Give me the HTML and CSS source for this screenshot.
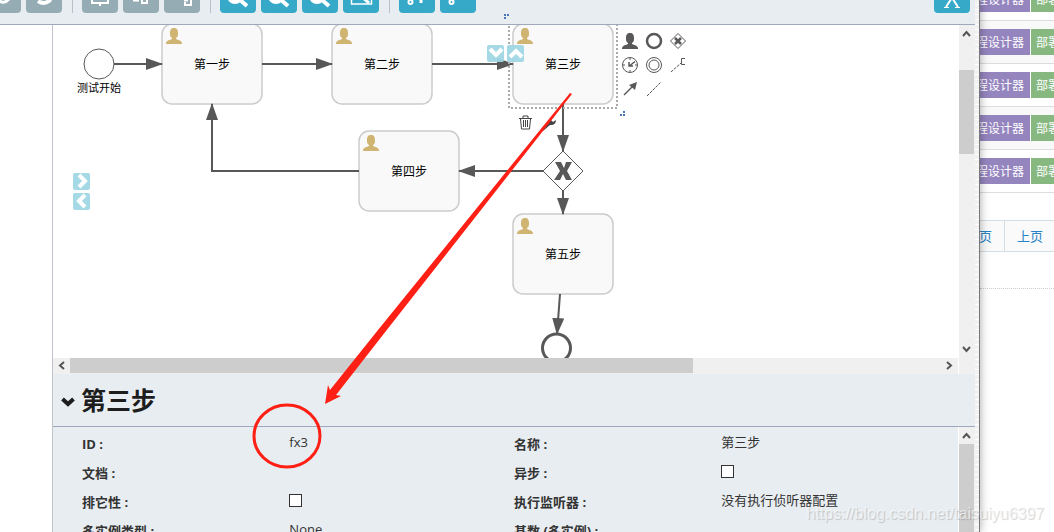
FILE: index.html
```html
<!DOCTYPE html>
<html lang="zh-CN">
<head>
  <meta charset="UTF-8" />
  <meta name="viewport" content="width=device-width, initial-scale=1.0"/>
  <title>流程设计器</title>
  <link rel="stylesheet" href="styles.css">
</head>
<body>
  <div class="designer">
    <div class="app">
      <!-- Toolbar -->
      <header class="toolbar">
        <button class="tool disabled" aria-label="Undo"><svg viewBox="0 0 36 28"><path d="M24 14q-5 6-11 1" stroke-width="3"/></svg></button>
        <button class="tool disabled" aria-label="Redo"><svg viewBox="0 0 36 28"><path d="M12 16q6 4 11 0 3-3 1-7" stroke-width="4"/></svg></button>
        <span class="divider"></span>
        <button class="tool disabled" aria-label="Align vertical"><svg viewBox="0 0 36 28"><path d="M10 8v10h16V8M18 18v3" stroke-width="2"/></svg></button>
        <button class="tool disabled" aria-label="Align horizontal"><svg viewBox="0 0 36 28"><path d="M10 15.500h6M19 8v10h5V8" stroke-width="2"/></svg></button>
        <button class="tool disabled" aria-label="Same size"><svg viewBox="0 0 36 28"><path d="M21 17v3h6V8M20 15.500h4" stroke-width="2"/></svg></button>
        <span class="divider"></span>
        <button class="tool" aria-label="Zoom in"><svg viewBox="0 0 36 28"><circle cx="15" cy="11" r="6" stroke-width="4"/><path d="M19 14l8 7" stroke-width="4"/></svg></button>
        <button class="tool" aria-label="Zoom out"><svg viewBox="0 0 36 28"><circle cx="15" cy="11" r="6" stroke-width="4"/><path d="M19 14l8 7" stroke-width="4"/></svg></button>
        <button class="tool" aria-label="Zoom actual"><svg viewBox="0 0 36 28"><circle cx="15" cy="11" r="6" stroke-width="4"/><path d="M19 14l8 7" stroke-width="4"/></svg></button>
        <button class="tool" aria-label="Zoom fit"><svg viewBox="0 0 36 28"><path d="M8.500 6v13h20V6" stroke-width="1.500"/><path d="M19 12l7 6" stroke-width="3"/></svg></button>
        <span class="divider"></span>
        <button class="tool" aria-label="Add bend point"><svg viewBox="0 0 36 28"><circle cx="11.500" cy="17" r="2" stroke-width="2"/><path d="M22 10v8" stroke-width="3"/></svg></button>
        <button class="tool" aria-label="Remove bend point"><svg viewBox="0 0 36 28"><circle cx="11.500" cy="17" r="2" stroke-width="2"/></svg></button>
        <button class="tool close" aria-label="Close"><svg viewBox="0 0 36 28"><path d="M13 5l11 17M23 5L12 22" stroke-width="2"/><path d="M10 22.500h5M21 22.500h5" stroke-width="1"/></svg></button>
      </header>

      <div class="workspace">
        <aside class="palette"></aside>
        <main class="editor">
          <div class="canvas-row">
            <div class="canvas-col">
              <div class="canvas">
                <svg class="diagram" width="1200" height="500" viewBox="53 25 1200 500">
                  <defs>
                    <marker id="arrow" markerUnits="userSpaceOnUse" markerWidth="17" markerHeight="12" refX="16" refY="6" orient="auto">
                      <path d="M0 0L17 6L0 12z" fill="#585858"/>
                    </marker>
                    <path id="user" d="M8 0C5 0 4 2 4 5c0 2 0 4 2 5v1c-2 1-5 1-6 4v1h16v-1c-1-3-4-3-6-4v-1c2-1 2-3 2-5 0-3-1-5-4-5z"/>
                    <rect id="task" width="100" height="80" rx="10" fill="#f9f9f9" stroke="#cbcbcb" stroke-width="1.500"/>
                  </defs>

                  <!-- Nodes -->
                  <circle cx="99" cy="64" r="15" fill="#fff" stroke="#585858"/>
                  <use href="#task" x="162" y="24"/>
                  <use href="#task" x="332" y="24"/>
                  <use href="#task" x="513" y="24"/>
                  <use href="#task" x="359" y="131"/>
                  <use href="#task" x="513" y="214"/>
                  <path d="M563 151l20 20-20 20-20-20z" fill="#fff" stroke="#585858"/>
                  <path d="M555 162h6l3 6 2-6h6l-5 9 5 9h-6l-3-6-3 6h-6l6-9z" fill="#585858"/>
                  <circle cx="556.500" cy="348" r="14" fill="#fff" stroke="#585858" stroke-width="3"/>

                  <g fill="#d0b471">
                    <use href="#user" x="166" y="28"/>
                    <use href="#user" x="336" y="28"/>
                    <use href="#user" x="517" y="28"/>
                    <use href="#user" x="363" y="135"/>
                    <use href="#user" x="517" y="218"/>
                  </g>

                  <!-- Flows -->
                  <g class="flow">
                    <path d="M114 64H162"/>
                    <path d="M262 64H332"/>
                    <path d="M432 64H513"/>
                    <path d="M563 104V151"/>
                    <path d="M543 171H459"/>
                    <path d="M359 171H212V104"/>
                    <path d="M563 191V214"/>
                    <path d="M560 294L557 334"/>
                  </g>

                  <g class="node-text">
                    <text x="99" y="92" class="event-text">测试开始</text>
                    <text x="212" y="69">第一步</text>
                    <text x="382" y="69">第二步</text>
                    <text x="563" y="69">第三步</text>
                    <text x="409" y="176">第四步</text>
                    <text x="563" y="259">第五步</text>
                  </g>

                  <!-- Selection -->
                  <rect x="509" y="20" width="108" height="88" fill="none" stroke="#aaa" stroke-width="2" stroke-dasharray="2 2"/>
                  <path d="M623 111h2v2h-2zM620 114h2v2h-2zM623 114h2v2h-2z" fill="#4677b8"/>

                  <!-- Grow buttons -->
                  <g fill="#9fd7e4" fill-opacity="0.95">
                    <rect x="487" y="45" width="17" height="17" rx="2"/>
                    <rect x="507" y="45" width="17" height="17" rx="2"/>
                    <rect x="73" y="173" width="17" height="17" rx="2"/>
                    <rect x="73" y="193" width="17" height="17" rx="2"/>
                  </g>
                  <path d="M490 49l6 6 6-6M510 57l6-6 6 6M79 175l6 6-6 6M85 195l-6 6 6 6" fill="none" stroke="#fff" stroke-width="4"/>

                  <!-- Quick menu -->
                  <use href="#user" x="622" y="33" fill="#585858"/>
                  <g fill="none" stroke="#585858">
                    <circle cx="654" cy="41" r="7" stroke-width="2.500"/>
                    <path d="M678 33.500l7.500 7.500-7.500 7.500-7.500-7.500z"/>
                    <path d="M675 38l6 6M681 38l-6 6" stroke-width="2.500"/>
                    <circle cx="630" cy="65" r="7.500"/>
                    <path d="M630 65.500l5-4M629 62v4h4" stroke-width="1.500"/>
                    <path d="M630 58v2M630 70v2M623 65h2M635 65h2"/>
                    <circle cx="654" cy="65" r="7.500"/>
                    <circle cx="654" cy="65" r="5"/>
                    <path d="M685 58.500h-3.500v6h3.500"/>
                    <path d="M671 72l10-9M647 96l14-14" stroke-dasharray="3 1"/>
                    <path d="M624 95l9-9" stroke-width="1.500"/>
                  </g>
                  <path d="M637 82l-2 8-6-5z" fill="#585858"/>
                  <g fill="none" stroke="#444">
                    <path d="M519 118.500h13M523 118v-2h5v2M520.500 119l1 10h8l1-10M523.500 120v7M525.500 120v7M527.500 120v7"/>
                  </g>
                  <path d="M541 129l8-8c0-2 2-4 5-4l-3 3 2 2 3-2c0 3-2 5-5 5h-1l-7 6z" fill="#444"/>
                </svg>
              </div>
              <div class="hscroll">
                <svg viewBox="0 0 17 15"><path d="M11 4L7 7.500L11 11"/></svg>
                <div class="track"><div class="thumb"></div></div>
                <svg viewBox="0 0 17 15"><path d="M6 4l4 3.500L6 11"/></svg>
              </div>
            </div>
            <div class="vscroll">
              <svg viewBox="0 0 15 17"><path d="M4 11l3.500-4L11 11"/></svg>
              <div class="track"><div class="thumb"></div></div>
              <svg viewBox="0 0 15 17"><path d="M4 6l3.500 4L11 6"/></svg>
            </div>
          </div>

          <div class="panel-title">
            <svg viewBox="0 0 14 10"><path d="M1.500 2l5.500 5 5.500-5"/></svg>
            <h1>第三步</h1>
          </div>

          <!-- Properties -->
          <div class="panel-row">
            <div class="properties">
              <div class="property"><span class="label">ID :</span><span class="value">fx3</span></div>
              <div class="property"><span class="label">名称 :</span><span class="value">第三步</span></div>
              <div class="property"><span class="label">文档 :</span><span class="value"></span></div>
              <div class="property"><label class="label" for="async">异步 :</label><span class="value"><input type="checkbox" id="async"></span></div>
              <div class="property"><label class="label" for="exclusive">排它性 :</label><span class="value"><input type="checkbox" id="exclusive"></span></div>
              <div class="property"><span class="label">执行监听器 :</span><span class="value">没有执行侦听器配置</span></div>
              <div class="property"><span class="label">多实例类型 :</span><span class="value">None</span></div>
              <div class="property"><span class="label">基数 (多实例) :</span><span class="value"></span></div>
            </div>
            <div class="vscroll panel-scroll">
              <svg viewBox="0 0 15 17"><path d="M4 11l3.500-4L11 11"/></svg>
              <div class="track"><div class="thumb"></div></div>
            </div>
          </div>
        </main>
      </div>
    </div>
    <div class="edge"></div>
  </div>

  <!-- Model list behind the designer -->
  <div class="list-page">
    <div class="list-row"><button class="design">流程设计器</button><button class="deploy">部署</button></div>
    <div class="list-row"><button class="design">流程设计器</button><button class="deploy">部署</button></div>
    <div class="list-row"><button class="design">流程设计器</button><button class="deploy">部署</button></div>
    <div class="list-row"><button class="design">流程设计器</button><button class="deploy">部署</button></div>
    <div class="list-row"><button class="design">流程设计器</button><button class="deploy">部署</button></div>
    <nav class="pager"><a href="#">首页</a><a href="#">上页</a></nav>
    <hr>
  </div>

  <svg class="annotation" width="1054" height="532" viewBox="0 0 1054 532">
    <path d="M504 14h2v2h-2zM507 14h2v2h-2zM504 17h2v2h-2z" fill="#4677b8"/>
    <path d="M570 93l2 1L386 331 336 395l5 1-16 8 3-19 2 5 48-60z" fill="#ff2015"/>
    <ellipse cx="287" cy="436" rx="33" ry="31" fill="none" stroke="#ff2015" stroke-width="3"/>
  </svg>
  <div class="watermark">https://blog.csdn.net/taisuiyu6397</div>
</body>
</html>
```
FILE: styles.css
```css
* {
  box-sizing: border-box;
}

body {
  margin: 0;
  height: 100vh;
  display: flex;
  position: relative;
  overflow: hidden;
  background: #fff;
  color: #333;
  font-family: "Open Sans", "Noto Sans CJK SC", sans-serif;
  font-size: 13px;
}

button {
  border: none;
  padding: 0;
  font-family: inherit;
  cursor: pointer;
}

.designer {
  flex: 1;
  min-width: 0;
  display: flex;
  border-right: 1px solid #777;
  box-shadow: 0 0 9px rgba(0, 0, 0, 0.35);
  z-index: 1;
  background: #fff;
}

.app {
  flex: 1;
  min-width: 0;
  display: flex;
  flex-direction: column;
}

.edge {
  width: 4px;
  background: repeating-linear-gradient(#f1f1f1 0, #f1f1f1 4px, #fff 4px, #fff 5px);
}

/* Toolbar */
.toolbar {
  height: 25px;
  flex: none;
  display: flex;
  align-items: flex-end;
  gap: 5px;
  padding: 0 5px 11px 0;
  overflow: hidden;
  background: #e8edf1;
  border-bottom: 1px solid #a0a8bd;
}

.tool {
  width: 36px;
  height: 28px;
  flex: none;
  border-radius: 4px;
  background: #36a9c9;
}

.tool:first-child {
  margin-left: -15px;
}

.tool svg {
  display: block;
  width: 36px;
  height: 28px;
  fill: none;
  stroke: #fff;
}

.tool.disabled {
  background: #95acb4;
}

.tool.close {
  margin-left: auto;
}

.divider {
  width: 1px;
  height: 28px;
  margin: 0 4px 0 5px;
  background: #b8c0c8;
}

.workspace {
  flex: 1;
  min-height: 0;
  display: flex;
}

.palette {
  width: 53px;
  border-right: 1px solid #c0c4cc;
}

.editor {
  flex: 1;
  min-width: 0;
  display: flex;
  flex-direction: column;
}

/* Canvas */
.canvas-row {
  flex: 1;
  min-height: 0;
  display: flex;
}

.canvas-col {
  flex: 1;
  min-width: 0;
  display: flex;
  flex-direction: column;
}

.canvas {
  flex: 1;
  min-height: 0;
  overflow: hidden;
}

.diagram {
  display: block;
}

.flow path {
  fill: none;
  stroke: #585858;
  stroke-width: 2;
  marker-end: url(#arrow);
}

.node-text text {
  font-size: 12px;
  text-anchor: middle;
  fill: #000;
}

.node-text .event-text {
  font-size: 11px;
}

/* Scrollbars */
.hscroll,
.vscroll {
  display: flex;
  flex: none;
  background: #f0f0f0;
}

.hscroll {
  height: 16px;
}

.hscroll svg {
  width: 17px;
  height: 15px;
}

.vscroll {
  width: 17px;
  flex-direction: column;
  border-left: 1px solid #fff;
}

.vscroll svg {
  width: 15px;
  height: 17px;
}

.vscroll svg,
.hscroll svg {
  flex: none;
  fill: none;
  stroke: #555;
  stroke-width: 2;
}

.track {
  flex: 1;
}

.thumb {
  background: #cdcdcd;
}

.hscroll .thumb {
  width: 71.5%;
  height: 15px;
}

.vscroll .thumb {
  width: 15px;
  height: 84px;
  margin-top: 28px;
}

.canvas-row .vscroll {
  padding-bottom: 16px;
}

/* Properties */
.panel-title {
  height: 53px;
  flex: none;
  display: flex;
  align-items: center;
  gap: 6px;
  padding-left: 8px;
  background: #e8edf1;
  border-bottom: 1px solid #a0a8bd;
}

.panel-title svg {
  width: 14px;
  height: 10px;
  margin-top: 4px;
  fill: none;
  stroke: #1d1d1d;
  stroke-width: 4;
}

.panel-title h1 {
  margin: 0;
  font-size: 25px;
  line-height: 36px;
  color: #1d1d1d;
}

.panel-row {
  height: 105px;
  flex: none;
  display: flex;
  background: #e8edf1;
}

.properties {
  flex: 1;
  display: grid;
  grid-template-columns: 1fr 1fr;
  grid-auto-rows: 29px;
  padding: 1px 12px 0 29px;
  overflow: hidden;
}

.property {
  display: flex;
  line-height: 29px;
}

.label {
  width: 48%;
  padding-top: 2px;
  font-weight: bold;
}

.value {
  flex: 1;
}

.value input {
  appearance: none;
  display: block;
  width: 13px;
  height: 13px;
  margin: 8px 0;
  background: #fff;
  border: 1px solid #333;
}

.panel-scroll .thumb {
  height: 100%;
  margin-top: 0;
}

/* Model list */
.list-page {
  width: 74px;
  flex: none;
  margin-top: -22px;
  overflow: hidden;
}

.list-row {
  height: 43px;
  display: flex;
  gap: 1px;
  padding-top: 8px;
  border-bottom: 1px solid #ddd;
}

.list-row:nth-child(even) {
  background: #f9f9f9;
}

.list-row button {
  height: 26px;
  display: flex;
  align-items: center;
  color: #fff;
  font-size: 12px;
  white-space: nowrap;
  overflow: hidden;
}

.design {
  width: 50px;
  flex: none;
  justify-content: flex-end;
  padding-right: 6px;
  background: #9585bf;
}

.deploy {
  flex: 1;
  padding-left: 5px;
  background: #87b87f;
}

.pager {
  display: flex;
  margin-top: 27px;
  border-top: 1px solid #d3dfe4;
  border-bottom: 1px solid #d3dfe4;
  background: #fafafa;
}

.pager a {
  flex: 1;
  padding-left: 12px;
  line-height: 30px;
  color: #2283c5;
  text-decoration: none;
  white-space: nowrap;
}

.pager a:first-child {
  flex: none;
  width: 25px;
  display: flex;
  justify-content: flex-end;
  padding: 0 12px 0 0;
  border-right: 1px solid #d3dfe4;
}

.list-page hr {
  margin: 36px 0 0;
  border: none;
  border-top: 1px dotted #ccc;
}

/* Marks over the page */
.annotation {
  position: absolute;
  top: 0;
  left: 0;
  z-index: 2;
  pointer-events: none;
}

.watermark {
  position: absolute;
  right: 10px;
  bottom: 8px;
  z-index: 3;
  font-family: "Liberation Sans", Arial, sans-serif;
  font-size: 16px;
  line-height: 20px;
  color: rgba(255, 255, 255, 0.6);
  text-shadow: 1px 1px 1px rgba(0, 0, 0, 0.18);
}
```
